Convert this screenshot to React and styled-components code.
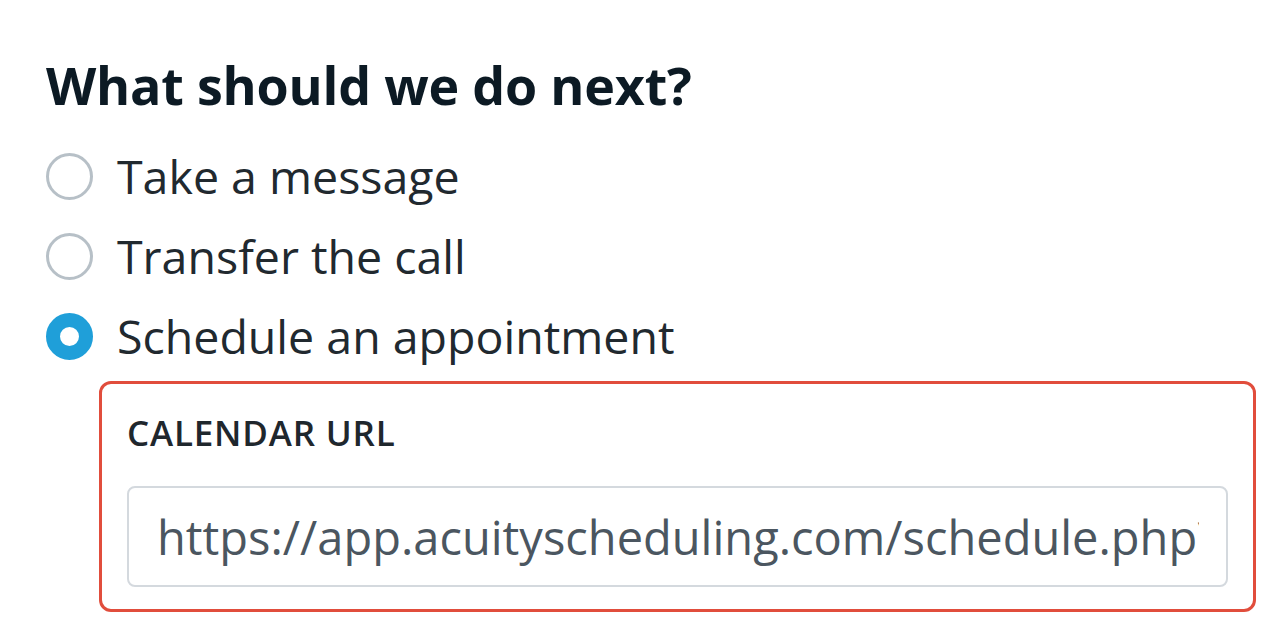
import React from 'react'
import styled, { createGlobalStyle } from 'styled-components'

const GlobalStyle = createGlobalStyle`
  html, body {
    margin: 0;
    padding: 0;
    background: #ffffff;
  }
  body {
    font-family: "Open Sans", "Noto Sans", sans-serif;
    -webkit-font-smoothing: antialiased;
  }
`;

const Page = styled.div`
  padding: 55px 16px 0 46px;
`;

const Heading = styled.h2`
  margin: 0;
  font-size: 52px;
  line-height: 60px;
  font-weight: 700;
  color: #0c1a24;
  letter-spacing: -0.2px;
`;

const Options = styled.div`
  margin-top: 21px;
  display: flex;
  flex-direction: column;
`;

const Option = styled.label`
  height: 80px;
  display: flex;
  align-items: center;
  gap: 24px;
  cursor: pointer;
`;

const Radio = styled.span`
  box-sizing: border-box;
  flex: none;
  width: 47px;
  height: 47px;
  border-radius: 50%;
  background: #ffffff;
  border: ${p => (p.checked ? '14px solid #1f9fd9' : '3px solid #b7c0c7')};
`;

const OptionText = styled.span`
  font-size: 46.5px;
  color: #21292f;
`;

const Details = styled.div`
  margin: 5px 0 0 53px;
  border: 3px solid #e14d3c;
  border-radius: 12px;
  padding: 31px 25px 22px 25px;
`;

const FieldLabel = styled.div`
  font-size: 35px;
  line-height: 36px;
  font-weight: 600;
  color: #1f272d;
  letter-spacing: 0.8px;
`;

const UrlInput = styled.input`
  display: block;
  box-sizing: border-box;
  margin-top: 35px;
  width: 100%;
  height: 101px;
  padding: 0 27px 0 28px;
  border: 2px solid #d4d9de;
  border-radius: 8px;
  font-family: "Open Sans", "Noto Sans", sans-serif;
  font-size: 47px;
  color: #4b5660;
  background: #ffffff;
  outline: none;
`;

const options = [
  { id: 'message', label: 'Take a message' },
  { id: 'transfer', label: 'Transfer the call' },
  { id: 'schedule', label: 'Schedule an appointment' },
];

const App = () => {
  const selected = 'schedule';

  return (
    <>
      <GlobalStyle />
      <Page>
        <Heading>What should we do next?</Heading>
        <Options>
          {options.map(o => (
            <Option key={o.id}>
              <Radio checked={o.id === selected} />
              <OptionText>{o.label}</OptionText>
            </Option>
          ))}
        </Options>
        <Details>
          <FieldLabel>CALENDAR URL</FieldLabel>
          <UrlInput
            readOnly
            defaultValue="https://app.acuityscheduling.com/schedule.php?owner=12345678"
          />
        </Details>
      </Page>
    </>
  )
}

export default App;
